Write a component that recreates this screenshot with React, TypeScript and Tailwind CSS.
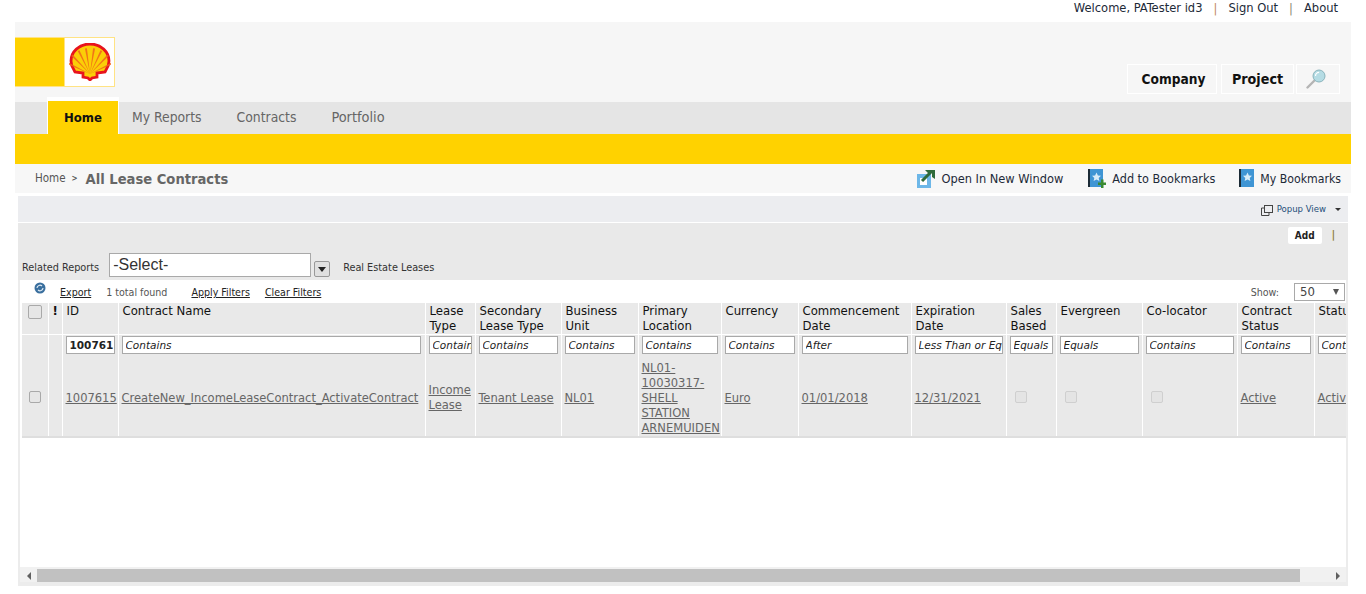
import React from "react";

const columns = [
  { title: ["ID"], width: 56, filter: "100761" },
  { title: ["Contract Name"], width: 307, filter: "Contains" },
  { title: ["Lease", "Type"], width: 50, filter: "Contains" },
  { title: ["Secondary", "Lease Type"], width: 86, filter: "Contains" },
  { title: ["Business", "Unit"], width: 77, filter: "Contains" },
  { title: ["Primary", "Location"], width: 83, filter: "Contains" },
  { title: ["Currency"], width: 77, filter: "Contains" },
  { title: ["Commencement", "Date"], width: 113, filter: "After" },
  { title: ["Expiration", "Date"], width: 95, filter: "Less Than or Equals" },
  { title: ["Sales", "Based"], width: 50, filter: "Equals" },
  { title: ["Evergreen"], width: 86, filter: "Equals" },
  { title: ["Co-locator"], width: 95, filter: "Contains" },
  { title: ["Contract", "Status"], width: 77, filter: "Contains" },
  { title: ["Status"], width: 80, filter: "Contains" },
];

const row = [
  ["1007615"],
  ["CreateNew_IncomeLeaseContract_ActivateContract"],
  ["Income", "Lease"],
  ["Tenant Lease"],
  ["NL01"],
  ["NL01-", "10030317-", "SHELL", "STATION", "ARNEMUIDEN"],
  ["Euro"],
  ["01/01/2018"],
  ["12/31/2021"],
  null,
  null,
  null,
  ["Active"],
  ["Active"],
];

function ShellLogo() {
  const rays = [-64, -44, -26, -9, 9, 26, 44, 64];
  return (
    <svg width="42" height="38" viewBox="0 0 42 38" aria-hidden="true">
      <path
        d="M21 1C10 1 2 9 2 18c0 3 1 6 3 9l1 2 8 1v4l5 1 2 2 2-2 5-1v-4l8-1 1-2c2-3 3-6 3-9C40 9 32 1 21 1z"
        fill="#fbce07"
        stroke="#e8141c"
        strokeWidth="2.8"
      />
      {rays.map((a) => (
        <path
          key={a}
          d="M21 31 L20 5 L22 5 Z"
          fill="#f0641a"
          transform={`rotate(${a} 21 31)`}
          opacity="0.85"
        />
      ))}
    </svg>
  );
}

function Magnifier() {
  return (
    <svg width="20" height="20" viewBox="0 0 20 20" aria-hidden="true">
      <path d="M9 11 L1.5 18.5" stroke="#b4b4b4" strokeWidth="2.4" strokeLinecap="round" />
      <circle cx="13" cy="7" r="6" fill="#b5dce4" stroke="#8ab4bc" strokeWidth="1" />
      <path d="M9.5 7a3.6 3.6 0 0 1 3.6-3.6" stroke="#ffffff" strokeWidth="1.2" fill="none" />
    </svg>
  );
}

function OpenWindowIcon() {
  return (
    <svg width="18" height="19" viewBox="0 0 18 19" aria-hidden="true" className="shrink-0">
      <rect x="0" y="5" width="14" height="14" fill="#6db7e8" />
      <rect x="3" y="9" width="7" height="7" fill="#ffffff" />
      <path d="M5 12 L14 3" stroke="#2f6b3a" strokeWidth="3" />
      <path d="M8 1 H18 V10 L15 8 V4 H11 Z" fill="#2f6b3a" />
    </svg>
  );
}

function BookIcon({ plus }: { plus?: boolean }) {
  return (
    <svg width="18" height="19" viewBox="0 0 18 19" aria-hidden="true" className="shrink-0">
      <rect x="0" y="0" width="2" height="18" fill="#1c2b36" />
      <rect x="2" y="0" width="13" height="18" fill="#3f95d4" />
      <path
        d="M8.5 3.5l1.4 3 3.1.3-2.3 2.1.7 3.1-2.9-1.6-2.9 1.6.7-3.1L4 6.8l3.1-.3z"
        fill="#d8ecf8"
      />
      {plus && <path d="M10 13.5h3v-3h2.5v3H18V16h-2.5v3H13v-3h-3z" fill="#3a8a32" />}
    </svg>
  );
}

function RefreshIcon() {
  return (
    <svg width="12" height="12" viewBox="0 0 12 12" aria-hidden="true">
      <circle cx="6" cy="6" r="5.5" fill="#3a6f9e" />
      <path d="M3 6a3 3 0 0 1 5-2M9 6a3 3 0 0 1-5 2" stroke="#dfeaf3" strokeWidth="1.2" fill="none" />
    </svg>
  );
}

function Check({ large, faded }: { large?: boolean; faded?: boolean }) {
  const size = large ? "w-[14px] h-[14px] mx-auto" : "w-[12px] h-[12px]";
  const tone = faded ? "ml-[5px] border-[#cfcfcf] bg-[#e4e4e4]" : "mx-auto border-[#a9a9a9] bg-[#e6e6e6]";
  return <span className={`block rounded-[2px] border ${size} ${tone}`} />;
}

export default function App() {
  return (
    <div className="w-[1366px] h-[594px] overflow-hidden bg-white font-['DejaVu_Sans',sans-serif] [font-stretch:condensed] text-[13px] text-[#222]">
      <div className="flex h-[22px] items-start justify-end pr-[28px] text-[12.8px] leading-[16px] text-[#1d2a38]">
        <span>Welcome, PATester id3</span>
        <span className="mx-[11px] text-[#c08a60]">|</span>
        <span>Sign Out</span>
        <span className="mx-[11px] text-[#8a8a70]">|</span>
        <span>About</span>
      </div>

      <div className="mx-[15px] flex flex-col">
        <div className="flex h-[80px] items-start justify-between bg-[#f6f6f6] pr-[11px]">
          <div className="mt-[15px] flex h-[50px] w-[100px] border border-l-0 border-[#ffe384] bg-[#ffd200]">
            <div className="ml-[49px] flex w-[50px] items-center justify-center border-l border-[#ffe384] bg-white">
              <ShellLogo />
            </div>
          </div>
          <div className="mt-[42px] flex h-[30px] items-stretch font-bold text-[#111]">
            <div className="flex w-[90px] items-center justify-center border border-white pl-[3px] pt-[1px] text-[13.6px]">Company</div>
            <div className="ml-[4px] flex w-[73px] items-center justify-center border border-white pt-[1px] text-[14.2px]">Project</div>
            <div className="ml-[2px] flex w-[44px] items-center justify-center border border-white pr-[4px]">
              <Magnifier />
            </div>
          </div>
        </div>

        <div className="flex h-[32px] bg-[#e5e5e5] pl-[32px] text-[13.8px] text-[#666]">
          <div className="-mt-[5px] flex h-[37px] w-[72px] items-center justify-center border-x border-t-[4px] border-white bg-[#ffd200] text-[13px] font-bold text-[#111]">
            Home
          </div>
          <div className="ml-[13px] flex items-center pb-[2px]">My Reports</div>
          <div className="ml-[35px] flex items-center pb-[2px]">Contracts</div>
          <div className="ml-[35px] flex items-center text-[14.4px]">Portfolio</div>
        </div>

        <div className="h-[30px] bg-[#ffd200]" />

        <div className="flex h-[29px] items-center justify-between bg-[#f7f7f7] pl-[20px] pr-[10px]">
          <div className="flex items-center pt-[1px] text-[#555]">
            <span className="text-[11.5px]">Home</span>
            <span className="ml-[6px] mr-[8px] text-[8px] font-bold">&gt;</span>
            <span className="text-[14.6px] font-bold text-[#666]">All Lease Contracts</span>
          </div>
          <div className="flex items-center pt-[1px] text-[#1d2a38]">
            <OpenWindowIcon />
            <span className="ml-[6px] text-[12.7px]">Open In New Window</span>
            <span className="ml-[25px]"><BookIcon plus /></span>
            <span className="ml-[6px] text-[12.5px]">Add to Bookmarks</span>
            <span className="ml-[24px]"><BookIcon /></span>
            <span className="ml-[3px] text-[12.2px]">My Bookmarks</span>
          </div>
        </div>
      </div>

      <div className="mx-[18px] mt-[3px] flex h-[390px] w-[1330px] flex-col">
        <div className="flex h-[27px] shrink-0 items-center justify-end gap-[4px] border-b border-white bg-[#ecedf0] pr-[7px] pt-[1px] text-[9.5px] text-[#1f4e79]">
          <svg width="12" height="12" viewBox="0 0 12 12" aria-hidden="true" fill="none" stroke="#444">
            <rect x="3.5" y="1.5" width="8" height="7" />
            <path d="M3 4H0.5V11.5H8V9" />
          </svg>
          <span>Popup View</span>
          <span className="ml-[5px] h-0 w-0 border-x-[3px] border-t-[3px] border-x-transparent border-t-[#333]" />
        </div>

        <div className="flex h-[57px] shrink-0 flex-col bg-[#e9e9e9] pl-[4px]">
          <div className="flex justify-end pr-[13px] pt-[4px]">
            <div className="flex h-[17px] w-[34px] items-center justify-center rounded-[2px] bg-white text-[10px] font-bold text-[#222]">
              Add
            </div>
            <span className="ml-[10px] text-[10px] font-bold text-[#8a7a30]">|</span>
          </div>
          <div className="mt-[9px] flex items-center text-[10.8px] text-[#333]">
            <span className="mt-[6px]">Related Reports</span>
            <div className="ml-[10px] flex h-[24px] w-[202px] items-center border border-[#a9a9a9] bg-white pl-[3px] font-['Liberation_Sans',sans-serif] text-[16px] [font-stretch:normal]">
              -Select-
            </div>
            <div className="ml-[3px] mt-[8px] flex h-[16px] w-[16px] items-center justify-center rounded-[2px] border border-[#999] bg-[#e0e0e0]">
              <span className="h-0 w-0 border-x-[4px] border-t-[5px] border-x-transparent border-t-[#222]" />
            </div>
            <span className="ml-[13px] mt-[6px]">Real Estate Leases</span>
          </div>
        </div>

        <div className="flex min-h-0 flex-1 flex-col border-x-2 border-b-[4px] border-[#ececec] bg-white">
          <div className="flex h-[23px] shrink-0 items-center pl-[14px] pr-[1px] text-[10.6px] text-[#222]">
            <span className="-mt-[7px]"><RefreshIcon /></span>
            <span className="ml-[14px] mt-[3px] font-medium underline">Export</span>
            <span className="ml-[15px] mt-[3px] text-[#555]">1 total found</span>
            <span className="ml-[24px] mt-[3px] underline">Apply Filters</span>
            <span className="ml-[15px] mt-[3px] underline">Clear Filters</span>
            <span className="ml-auto mt-[3px] text-[#555]">Show:</span>
            <div className="ml-[15px] flex h-[18px] w-[51px] items-center justify-between border border-[#a9a9a9] pl-[5px] pr-[5px] text-[13px] text-[#444]">
              50
              <span className="h-0 w-0 border-x-[3px] border-t-[6px] border-x-transparent border-t-[#555]" />
            </div>
          </div>

          <div className="min-h-0 flex-1 overflow-hidden pl-[2px]">
            <table className="w-[1372px] table-fixed border-collapse bg-[#e9e9e9] text-[#111]">
              <colgroup>
                <col className="w-[26px]" />
                <col className="w-[14px]" />
                {columns.map((c) => (
                  <col key={c.title[0]} style={{ width: c.width }} />
                ))}
              </colgroup>
              <thead>
                <tr className="h-[31px] border-b border-white text-left align-top text-[13px] leading-[15px]">
                  <th className="border-r border-white pt-[2px] font-normal"><Check large /></th>
                  <th className="border-r border-white pl-[4px] font-bold">!</th>
                  {columns.map((c) => (
                    <th key={c.title[0]} className="overflow-hidden whitespace-nowrap border-r border-white pl-[4px] font-normal">
                      {c.title.map((t) => (
                        <div key={t}>{t}</div>
                      ))}
                    </th>
                  ))}
                </tr>
                <tr className="h-[24px]">
                  <th className="border-r border-white" />
                  <th className="border-r border-white" />
                  {columns.map((c, i) => (
                    <th key={c.title[0]} className="border-r border-white px-[3px] align-top pt-[1px]">
                      <input
                        readOnly
                        value={c.filter}
                        className={`block h-[18px] border border-[#a9a9a9] bg-white pl-[3px] font-['DejaVu_Sans',sans-serif] text-[10.5px] text-[#222] [font-stretch:normal] ${
                          i === 0 ? "font-bold" : "font-normal italic"
                        } ${i === 1 ? "w-[299px]" : "w-full"}`}
                      />
                    </th>
                  ))}
                </tr>
              </thead>
              <tbody>
                <tr className="h-[79px] border-b-2 border-[#dedede] text-[12.8px] leading-[15px] text-[#666]">
                  <td className="border-r border-white"><Check /></td>
                  <td className="border-r border-white" />
                  {row.map((cell, i) => (
                    <td key={columns[i].title[0]} className="overflow-hidden whitespace-nowrap border-r border-white pl-[3px]">
                      {cell ? (
                        cell.map((t) => (
                          <div key={t}>
                            <span className="underline">{t}</span>
                          </div>
                        ))
                      ) : (
                        <Check faded />
                      )}
                    </td>
                  ))}
                </tr>
              </tbody>
            </table>
          </div>

          <div className="flex h-[15px] shrink-0 items-end bg-[#f1f1f1]">
            <div className="flex h-[13px] w-[17px] shrink-0 items-center justify-center">
              <span className="h-0 w-0 border-y-[4px] border-r-[4px] border-y-transparent border-r-[#606060]" />
            </div>
            <div className="h-[13px] w-[1263px] bg-[#c1c1c1]" />
            <div className="ml-auto flex h-[13px] w-[17px] shrink-0 items-center justify-center">
              <span className="h-0 w-0 border-y-[4px] border-l-[4px] border-y-transparent border-l-[#606060]" />
            </div>
          </div>
        </div>
      </div>
    </div>
  );
}
